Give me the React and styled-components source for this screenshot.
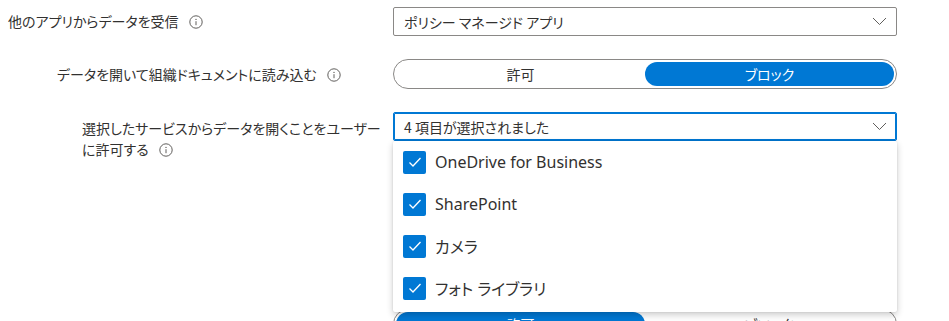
import styled, { createGlobalStyle } from 'styled-components';

const GlobalStyle = createGlobalStyle`
  body {
    margin: 0;
    background: #ffffff;
    font-family: "Noto Sans", "Noto Sans CJK JP", sans-serif;
    color: #323130;
  }
`;

const services = ['OneDrive for Business', 'SharePoint', 'カメラ', 'フォト ライブラリ'];

function InfoIcon() {
  return (
    <Info viewBox="0 0 14 14">
      <circle cx="7" cy="7" r="6.2" fill="none" stroke="#605e5c" strokeWidth="1" />
      <circle cx="7" cy="4.4" r="0.7" fill="#605e5c" />
      <line x1="7" y1="6.2" x2="7" y2="10.2" stroke="#605e5c" strokeWidth="1" />
    </Info>
  );
}

function Chevron() {
  return (
    <ChevronIcon viewBox="0 0 15 9">
      <polyline points="1,1 7.5,7.5 14,1" fill="none" stroke="#605e5c" strokeWidth="1" />
    </ChevronIcon>
  );
}

function Check() {
  return (
    <svg width="14" height="12" viewBox="0 0 14 12">
      <polyline points="1.5,6.5 5,10 12.5,2" fill="none" stroke="#ffffff" strokeWidth="1.3" />
    </svg>
  );
}

function Toggle({ selected }) {
  return (
    <ToggleBox>
      <ToggleOption $active={selected === 0}>許可</ToggleOption>
      <ToggleOption $active={selected === 1}>ブロック</ToggleOption>
    </ToggleBox>
  );
}

export default function App() {
  return (
    <>
      <GlobalStyle />
      <Form>
        <Row $indent={8}>
          <Label>
            他のアプリからデータを受信
            <InfoIcon />
          </Label>
          <Select>
            <span>ポリシー マネージド アプリ</span>
            <Chevron />
          </Select>
        </Row>
        <Row $indent={57}>
          <Label>
            データを開いて組織ドキュメントに読み込む
            <InfoIcon />
          </Label>
          <Toggle selected={1} />
        </Row>
        <Row $indent={82} $top>
          <Label $wrap>
            選択したサービスからデータを開くことをユーザー
            <br />
            に許可する
            <InfoIcon />
          </Label>
          <SelectWrap>
            <Select $focused>
              <span>4 項目が選択されました</span>
              <Chevron />
            </Select>
            <Menu>
              {services.map((s) => (
                <MenuItem key={s}>
                  <CheckBox>
                    <Check />
                  </CheckBox>
                  {s}
                </MenuItem>
              ))}
            </Menu>
          </SelectWrap>
        </Row>
        <Row $indent={82} $gap={126}>
          <Label />
          <Toggle selected={0} />
        </Row>
      </Form>
    </>
  );
}

const Form = styled.div`
  display: flex;
  flex-direction: column;
  padding-top: 7px;
  width: 949px;
  height: 321px;
  overflow: hidden;
  box-sizing: border-box;
`;

const Row = styled.div`
  display: grid;
  grid-template-columns: 1fr 504px 52px;
  align-items: ${({ $top }) => ($top ? 'start' : 'center')};
  padding-left: ${({ $indent }) => $indent}px;
  margin-bottom: 23px;
  margin-top: ${({ $gap }) => ($gap ? $gap : 0)}px;
  flex: none;
  &::after {
    content: '';
  }
`;

const Label = styled.div`
  font-family: "Noto Sans CJK JP", sans-serif;
  font-feature-settings: 'palt';
  font-size: 14px;
  line-height: 21px;
  color: #323130;
  padding-top: ${({ $wrap }) => ($wrap ? '6px' : '0')};
  svg {
    margin-left: 10px;
    vertical-align: -2px;
  }
`;

const Info = styled.svg`
  width: 14px;
  height: 14px;
`;

const ChevronIcon = styled.svg`
  width: 15px;
  height: 9px;
`;

const Select = styled.div`
  box-sizing: border-box;
  height: 29px;
  display: flex;
  align-items: center;
  justify-content: space-between;
  padding: 0 9px 0 10px;
  border: 1px solid ${({ $focused }) => ($focused ? '#0078d4' : '#8a8886')};
  box-shadow: ${({ $focused }) => ($focused ? 'inset 0 0 0 1px #0078d4' : 'none')};
  border-radius: 2px;
  font-family: "Noto Sans CJK JP", sans-serif;
  font-feature-settings: 'palt';
  font-size: 14px;
  color: #323130;
  background: #ffffff;
`;

const SelectWrap = styled.div`
  position: relative;
`;

const Menu = styled.div`
  position: absolute;
  top: 29px;
  left: 0;
  right: 0;
  z-index: 2;
  background: #ffffff;
  box-shadow: 0 3px 7px rgba(0, 0, 0, 0.2), 0 0 2px rgba(0, 0, 0, 0.12);
  border-radius: 2px;
  padding: 0 0 3px;
`;

const MenuItem = styled.div`
  height: 42px;
  display: flex;
  align-items: center;
  gap: 9px;
  padding-left: 10px;
  font-family: "Noto Sans", "Noto Sans CJK JP", sans-serif;
  font-feature-settings: 'palt';
  font-size: 16px;
  color: #323130;
`;

const CheckBox = styled.span`
  width: 23px;
  height: 23px;
  border-radius: 2px;
  background: #0078d4;
  display: flex;
  align-items: center;
  justify-content: center;
  flex: none;
`;

const ToggleBox = styled.div`
  box-sizing: border-box;
  height: 30px;
  display: grid;
  grid-template-columns: 1fr 1fr;
  padding: 2px;
  border: 1px solid #8a8886;
  border-radius: 15px;
  background: #ffffff;
`;

const ToggleOption = styled.div`
  display: flex;
  align-items: center;
  justify-content: center;
  border-radius: 13px;
  font-family: "Noto Sans CJK JP", sans-serif;
  font-feature-settings: 'palt';
  font-size: 14px;
  color: ${({ $active }) => ($active ? '#ffffff' : '#323130')};
  background: ${({ $active }) => ($active ? '#0078d4' : 'transparent')};
`;
